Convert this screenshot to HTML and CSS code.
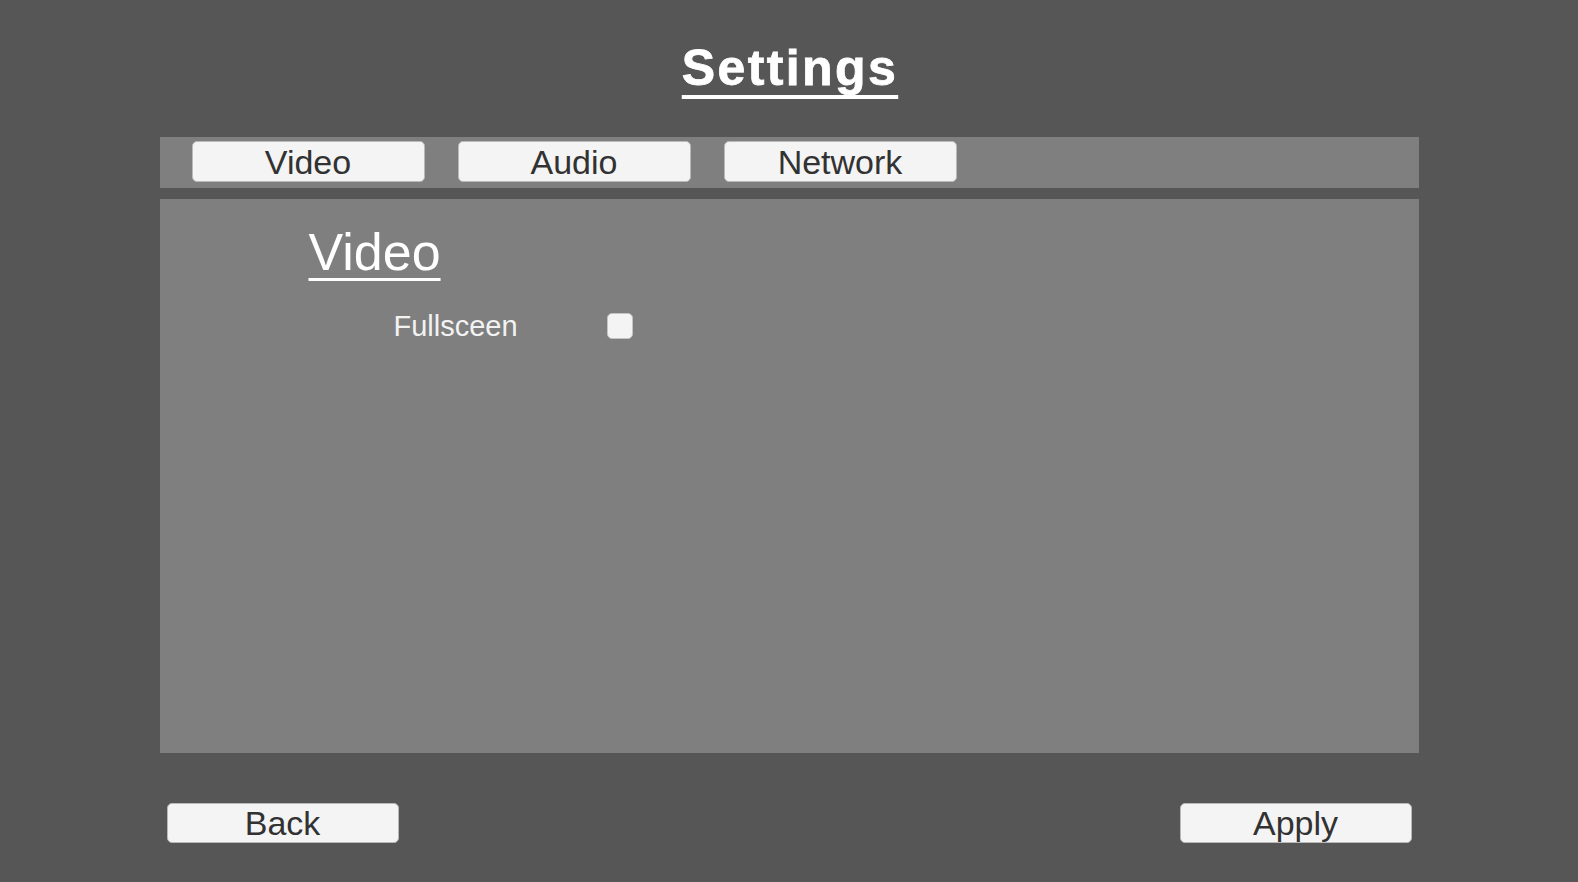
FILE: index.html
```html
<!DOCTYPE html>
<html lang="en">
<head>
  <meta charset="UTF-8">
  <meta name="viewport" content="width=device-width, initial-scale=1.0">
  <title>Settings</title>
  <link rel="stylesheet" href="styles.css">
</head>
<body>
  <div class="page">
    <h1 class="title">Settings</h1>

    <div class="tabs">
      <button class="tab">Video</button>
      <button class="tab">Audio</button>
      <button class="tab">Network</button>
    </div>

    <div class="panel">
      <h2 class="section">Video</h2>
      <div class="row">
        <span class="label">Fullsceen</span>
        <span class="checkbox"></span>
      </div>
    </div>

    <div class="footer">
      <button class="btn">Back</button>
      <button class="btn">Apply</button>
    </div>
  </div>
</body>
</html>
```

FILE: styles.css
```css
body {
  font-family: 'Liberation Sans', Arial, Helvetica, sans-serif;
  margin: 0px;
  background-color: #565656;
}

.page {
  width: 1259px;
  margin: 0 auto;
}

.title {
  margin: 39px 0px 0px 0px;
  height: 58px;
  line-height: 58px;
  font-size: 50px;
  font-weight: bold;
  letter-spacing: 2.4px;
  padding-left: 2px;
  -webkit-text-stroke: 0.8px #ffffff;
  color: #ffffff;
  text-align: center;
  text-decoration: underline;
  text-decoration-thickness: 3.5px;
  text-underline-offset: 10px;
  text-decoration-skip-ink: none;
}

.tabs {
  margin-top: 40px;
  height: 51px;
  box-sizing: border-box;
  padding: 4px 0px 0px 32px;
  display: flex;
  align-items: flex-start;
  gap: 33px;
  background-color: #7f7f7f;
}

.tab, .btn {
  font-family: 'Liberation Sans', Arial, Helvetica, sans-serif;
  font-size: 34px;
  color: #323232;
  background-color: #f4f4f4;
  border: 1px solid #b9b9b9;
  border-radius: 5px;
  text-align: center;
  box-sizing: border-box;
  margin: 0px;
}

.tab {
  width: 233px;
  height: 41px;
  padding: 1px 0px 0px 0px;
  line-height: 38px;
}

.panel {
  margin-top: 11px;
  height: 554px;
  box-sizing: border-box;
  padding: 23px 0px 0px 149px;
  background-color: #7f7f7f;
}

.section {
  margin: 0px;
  height: 60px;
  line-height: 60px;
  font-size: 52px;
  font-weight: normal;
  color: #ffffff;
  text-decoration: underline;
  text-decoration-thickness: 3px;
  text-underline-offset: 8px;
  text-decoration-skip-ink: none;
}

.row {
  margin: 28px 0px 0px 85px;
  height: 32px;
  display: flex;
  align-items: center;
}

.label {
  width: 213px;
  font-size: 29px;
  line-height: 32px;
  color: #f2f2f2;
}

.checkbox {
  width: 26px;
  height: 26px;
  box-sizing: border-box;
  background-color: #f4f4f4;
  border: 1px solid #c4c4c4;
  border-radius: 5px;
}

.footer {
  margin-top: 50px;
  padding: 0px 7px;
  display: flex;
  justify-content: space-between;
}

.btn {
  width: 232px;
  height: 40px;
  padding: 0px;
  line-height: 38px;
}
```
